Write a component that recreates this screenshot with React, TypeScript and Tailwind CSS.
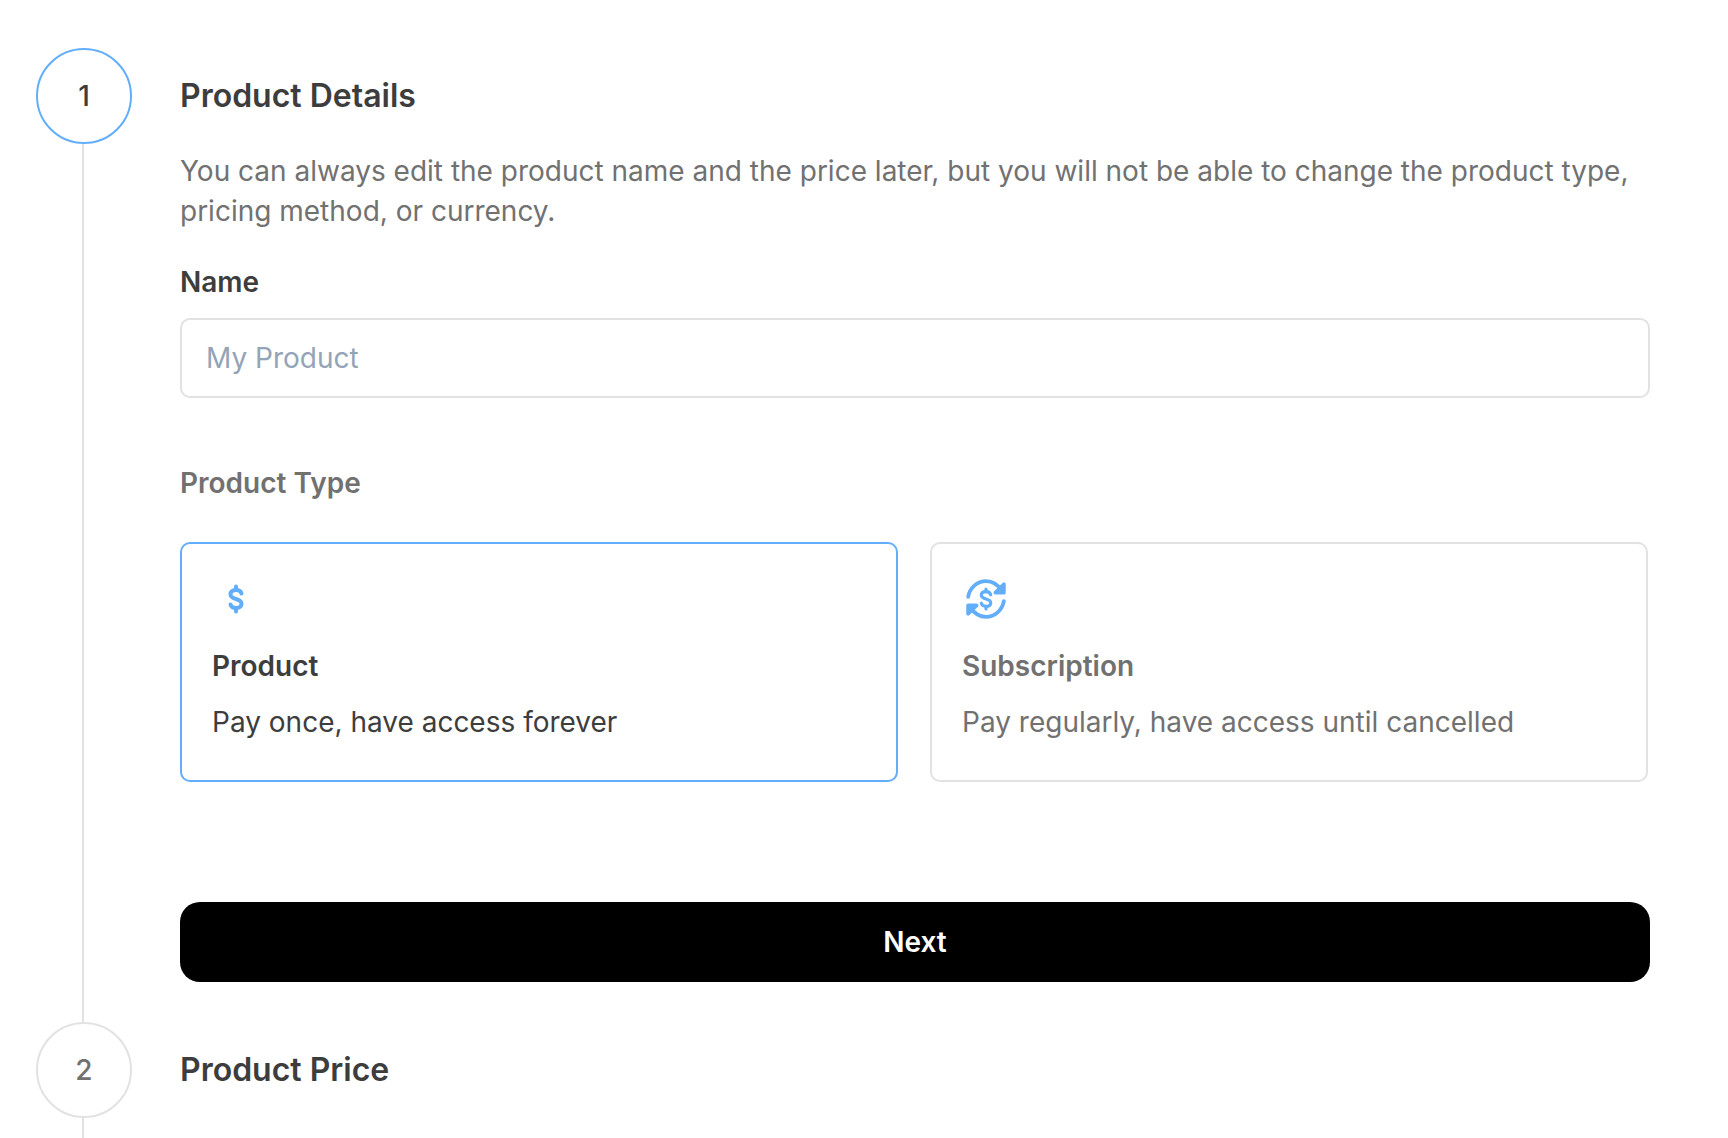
const FONT = "font-['Inter','Liberation_Sans',sans-serif]";
const BLUE = "#62aefb";

function DollarIcon() {
  return (
    <svg width="20" height="30" viewBox="0 0 20 30" fill="none" stroke={BLUE} strokeWidth="4" strokeLinecap="round" strokeLinejoin="round">
      <path d="M10 2.500V6" />
      <path d="M10 24v3.500" />
      <path d="M15.500 9.500C15 7.500 13 6 10 6 6.500 6 4.500 7.800 4.500 10.500 4.500 16 15.500 14 15.500 19.500 15.500 22.200 13.500 24 10 24 7 24 5 22.500 4.500 20.500" />
    </svg>
  );
}

function SubscriptionIcon() {
  return (
    <svg width="42" height="42" viewBox="0 0 40 40" fill="none" stroke={BLUE} strokeWidth="3.6" strokeLinecap="round" strokeLinejoin="round">
      <path d="M3 18C4.500 9.500 11.500 3 20 3c6 0 11 3 15 9" />
      <path d="M37 22c-1.500 8.500-8.500 15-17 15-6 0-11-3-15-9" />
      <path d="M37 6v8h-8z" fill={BLUE} />
      <path d="M3 34v-8h8z" fill={BLUE} />
      <path d="M20 10.500V13M20 27v2.500" strokeWidth="3" />
      <path d="M24.500 16C24 14 22.500 13 20 13c-3 0-4.500 1.500-4.500 3.500 0 4.500 9 2.500 9 7 0 2-1.500 3.500-4.500 3.500-2.500 0-4-1-4.500-3" strokeWidth="3" />
    </svg>
  );
}

function StepCircle({ n, active }: { n: number; active?: boolean }) {
  return (
    <div
      className={`w-24 h-24 shrink-0 rounded-full border-2 bg-white flex items-center justify-center text-[28px] font-medium ${
        active ? "border-[#62aefb] text-[#3d3d3d]" : "border-[#e2e2e2] text-[#717171]"
      }`}
    >
      {n}
    </div>
  );
}

export default function App() {
  return (
    <div className={`${FONT} w-[1728px] h-[1138px] bg-white overflow-hidden pt-12 pl-9 text-[#3d3d3d]`}>
      <div className="flex gap-12">
        <div className="flex flex-col items-center w-24 shrink-0">
          <StepCircle n={1} active />
          <div className="w-0.5 flex-1 bg-[#e2e2e2] -translate-x-px" />
        </div>
        <div className="w-[1470px] pb-10">
          <h2 className="h-24 flex items-center text-[32px] font-semibold">Product Details</h2>
          <p className="mt-[7px] text-[28px] leading-10 text-[#717171]">
            You can always edit the product name and the price later, but you will not be able to change the product type, pricing method, or currency.
          </p>
          <label className="block mt-[31px] text-[28px] leading-10 font-semibold">Name</label>
          <input
            readOnly
            placeholder="My Product"
            className="mt-4 w-full h-20 rounded-[10px] border-2 border-[#e2e2e2] px-6 text-[28px] outline-none placeholder:text-[#94a3b8]"
          />
          <div className="mt-[65px] text-[28px] leading-10 font-semibold text-[#717171]">Product Type</div>
          <div className="mt-[39px] flex gap-8 w-[1468px]">
            <div className="flex-1 h-60 rounded-[10px] border-2 border-[#62aefb] px-[30px] pt-[29px]">
              <div className="w-[48px] h-[52px] flex items-center justify-center"><DollarIcon /></div>
              <div className="mt-[21px] text-[28px] leading-10 font-semibold">Product</div>
              <div className="mt-4 text-[28px] leading-10">Pay once, have access forever</div>
            </div>
            <div className="flex-1 h-60 rounded-[10px] border-2 border-[#e2e2e2] px-[30px] pt-[29px] text-[#717171]">
              <div className="w-[48px] h-[52px] flex items-center justify-center"><SubscriptionIcon /></div>
              <div className="mt-[21px] text-[28px] leading-10 font-semibold">Subscription</div>
              <div className="mt-4 text-[28px] leading-10">Pay regularly, have access until cancelled</div>
            </div>
          </div>
          <button className="mt-[120px] w-full h-20 rounded-[20px] bg-black text-white text-[28px] font-semibold">Next</button>
        </div>
      </div>
      <div className="flex gap-12">
        <div className="flex flex-col items-center w-24 shrink-0">
          <StepCircle n={2} />
          <div className="w-0.5 h-24 bg-[#e2e2e2] -translate-x-px" />
        </div>
        <h2 className="h-24 flex items-center text-[32px] font-semibold">Product Price</h2>
      </div>
    </div>
  );
}
